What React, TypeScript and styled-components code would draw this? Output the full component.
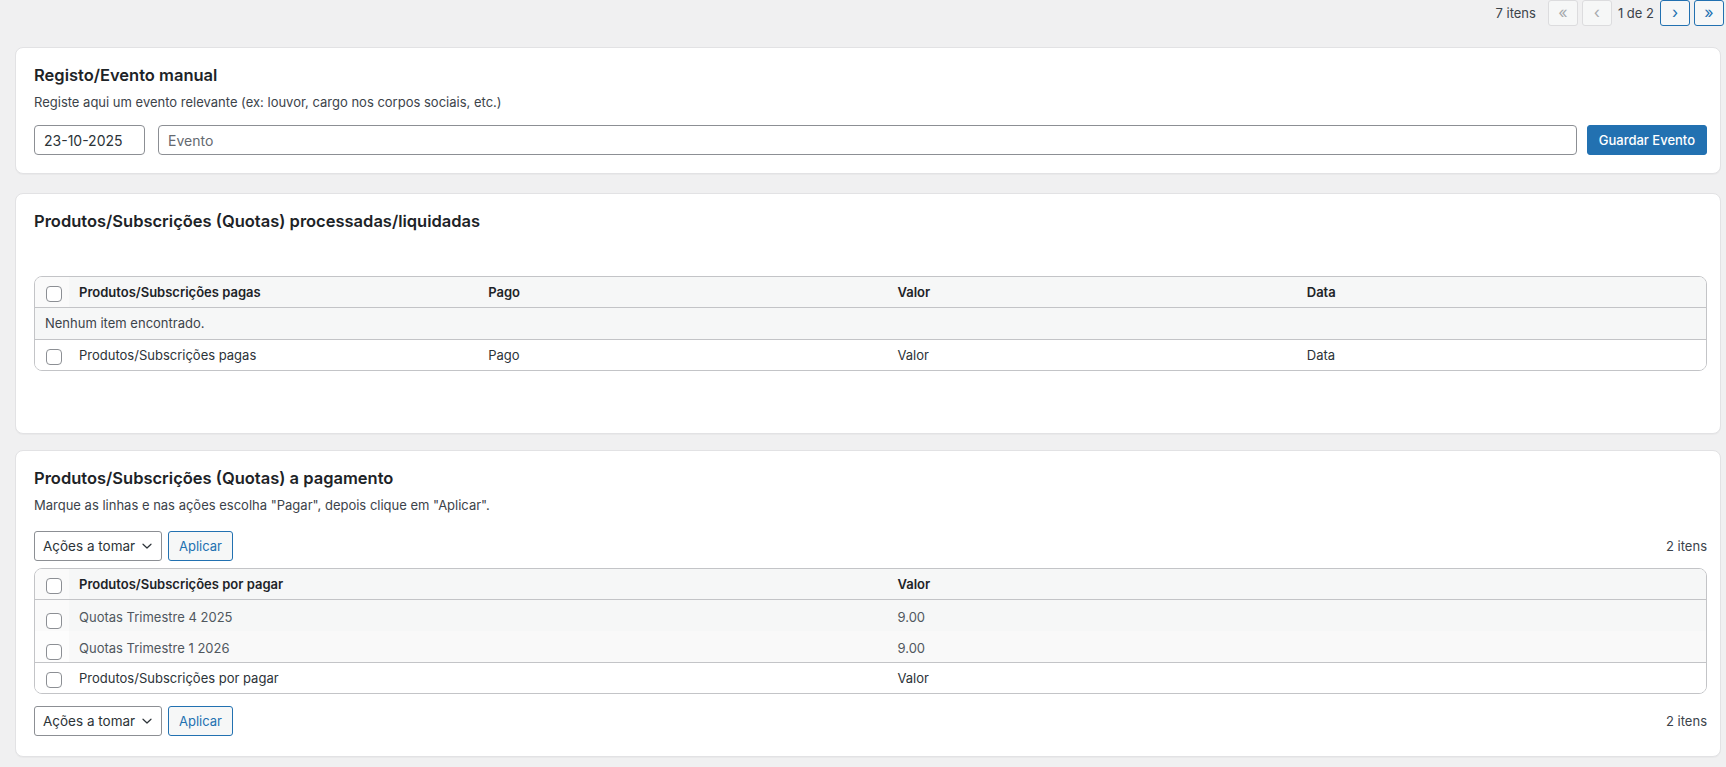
import React from "react";
import styled, { createGlobalStyle, css } from "styled-components";

const GlobalStyle = createGlobalStyle`
  html, body {
    margin: 0;
    padding: 0;
    background: #f0f0f1;
  }
  body {
    font-family: Inter, "Noto Sans", "Liberation Sans", sans-serif;
    font-size: 13px;
    line-height: 1.4;
    color: #3c434a;
    -webkit-font-smoothing: antialiased;
  }
  * { box-sizing: border-box; }
`;

const Page = styled.div`
  padding: 0 5px 11px 15px;
`;

/* ---------- pagination strip at the top ---------- */

const TopPager = styled.nav`
  display: flex;
  justify-content: flex-end;
  align-items: center;
  height: 26px;
  margin-right: -3px;
`;

const ItemCount = styled.span`
  font-size: 13px;
  color: #3c434a;
  white-space: nowrap;
`;

const PagerCount = styled(ItemCount)`
  margin-right: 12px;
`;

const PagerButtons = styled.div`
  display: flex;
  align-items: center;
  gap: 4px;
`;

const PageButton = styled.button<{ $disabled?: boolean }>`
  width: 30px;
  height: 26px;
  padding: 0 0 2px;
  border-radius: 3px;
  font-family: inherit;
  font-size: 16px;
  line-height: 1;
  display: flex;
  align-items: center;
  justify-content: center;
  cursor: pointer;
  ${({ $disabled }) =>
    $disabled
      ? css`
          background: #f6f7f7;
          border: 1px solid #dcdcde;
          color: #a7aaad;
          cursor: default;
        `
      : css`
          background: #f6f7f7;
          border: 1px solid #2271b1;
          color: #2271b1;
        `}
`;

const PageInfo = styled.span`
  margin: 0 2px;
  color: #3c434a;
`;

/* ---------- cards ---------- */

const Stack = styled.div`
  display: flex;
  flex-direction: column;
  margin-top: 21px;
`;

const Card = styled.section<{ $gap?: number; $bottom?: number }>`
  background: #fff;
  border: 1px solid #e2e2e4;
  border-radius: 8px;
  box-shadow: 0 1px 1px rgba(0, 0, 0, 0.03);
  padding: 16px 13px ${({ $bottom = 20 }) => $bottom}px 18px;
  margin-top: ${({ $gap = 0 }) => $gap}px;
`;

const CardTitle = styled.h2`
  margin: 0;
  font-size: 16.5px;
  line-height: 22px;
  font-weight: 600;
  color: #1d2327;
`;

const Description = styled.p`
  margin: 6px 0 0;
  line-height: 20px;
  color: #3c434a;
`;

/* ---------- manual event form ---------- */

const EventForm = styled.form`
  display: flex;
  align-items: center;
  margin-top: 13px;
`;

const TextField = styled.input<{ $width?: number }>`
  height: 30px;
  padding: 0 9px;
  border: 1px solid #8c8f94;
  border-radius: 4px;
  font-family: inherit;
  font-size: 14px;
  color: #2c3338;
  background: #fff;
  ${({ $width }) =>
    $width
      ? css`
          width: ${$width}px;
          flex: none;
        `
      : css`
          flex: 1;
          min-width: 0;
        `}
  &::placeholder {
    color: #646970;
  }
`;

const DateField = styled(TextField)`
  margin-right: 13px;
`;

const PrimaryButton = styled.button`
  margin-left: 10px;
  height: 30px;
  padding: 0 11px;
  border: 1px solid #2271b1;
  border-radius: 3px;
  background: #2271b1;
  color: #fff;
  font-family: inherit;
  font-size: 13px;
  font-weight: 500;
  white-space: nowrap;
  cursor: pointer;
`;

/* ---------- table navigation ---------- */

const Tablenav = styled.div<{ $top: number }>`
  display: flex;
  align-items: center;
  justify-content: space-between;
  height: 30px;
  margin-top: ${({ $top }) => $top}px;
`;

const BulkActions = styled.div`
  display: flex;
  align-items: center;
  gap: 6px;
`;

const SelectBox = styled.div`
  display: flex;
  align-items: center;
  width: 128px;
  height: 30px;
  padding: 0 8px;
  border: 1px solid #8c8f94;
  border-radius: 3px;
  background: #fff;
  color: #2c3338;
  font-size: 13.5px;
  white-space: nowrap;
  gap: 4px;
`;

const Chevron = styled.svg`
  width: 12px;
  height: 12px;
  margin-left: auto;
  flex: none;
`;

const SecondaryButton = styled.button`
  height: 30px;
  padding: 0 10px;
  border: 1px solid #2271b1;
  border-radius: 3px;
  background: #f6f7f7;
  color: #2271b1;
  font-family: inherit;
  font-size: 13px;
  cursor: pointer;
`;

/* ---------- list table ---------- */

const TableFrame = styled.div<{ $top: number }>`
  margin-top: ${({ $top }) => $top}px;
  border: 1px solid #c3c4c7;
  border-radius: 8px;
  overflow: hidden;
`;

const Table = styled.table`
  width: 100%;
  border-collapse: separate;
  border-spacing: 0;
  table-layout: fixed;
`;

const CheckCol = styled.col`
  width: 34px;
`;

type Tone = "head" | "odd" | "even" | "foot";

const rowBg: Record<Tone, string> = {
  head: "#f6f7f7",
  odd: "#f6f7f7",
  even: "#f9f9f9",
  foot: "#ffffff",
};

const cbBg: Record<Tone, string> = {
  head: "#fafafa",
  odd: "#fafafa",
  even: "#fdfdfd",
  foot: "#ffffff",
};

const Cell = styled.td<{ $tone: Tone }>`
  height: 31px;
  padding: 0 10px;
  text-align: left;
  vertical-align: middle;
  font-size: 13px;
  background: ${({ $tone }) => rowBg[$tone]};
  ${({ $tone }) =>
    $tone === "head" &&
    css`
      font-weight: 600;
      color: #1d2327;
      border-bottom: 1px solid #c3c4c7;
    `}
  ${({ $tone }) =>
    $tone === "foot" &&
    css`
      font-weight: 400;
      color: #2c3338;
      border-top: 1px solid #c3c4c7;
    `}
  ${({ $tone }) =>
    ($tone === "odd" || $tone === "even") &&
    css`
      color: #50575e;
      padding-top: 3px;
    `}
`;

const CheckCell = styled(Cell)`
  padding: 0 0 0 11px;
  background: ${({ $tone }) => cbBg[$tone]};
  ${({ $tone }) =>
    ($tone === "odd" || $tone === "even") &&
    css`
      vertical-align: top;
      padding-top: 13px;
    `}
  ${({ $tone }) =>
    ($tone === "head" || $tone === "foot") &&
    css`
      padding-top: 3px;
    `}
`;

const EmptyCell = styled(Cell)`
  color: #3c434a;
  padding-top: 0;
`;

const Checkbox = styled.span`
  display: block;
  width: 16px;
  height: 16px;
  border: 1px solid #8c8f94;
  border-radius: 4px;
  background: #fff;
`;

type Row = { name: string; value: string };

const unpaid: Row[] = [
  { name: "Quotas Trimestre 4 2025", value: "9.00" },
  { name: "Quotas Trimestre 1 2026", value: "9.00" },
];

function ChevronDown() {
  return (
    <Chevron viewBox="0 0 12 12" fill="none">
      <path
        d="M2 4.2 6 8l4-3.8"
        stroke="#2c3338"
        strokeWidth="1.2"
        strokeLinecap="round"
        strokeLinejoin="round"
      />
    </Chevron>
  );
}

function BulkBar({ top }: { top: number }) {
  return (
    <Tablenav $top={top}>
      <BulkActions>
        <SelectBox>
          Ações a tomar
          <ChevronDown />
        </SelectBox>
        <SecondaryButton type="button">Aplicar</SecondaryButton>
      </BulkActions>
      <ItemCount>2 itens</ItemCount>
    </Tablenav>
  );
}

export default function App() {
  const paidCols = ["Produtos/Subscrições pagas", "Pago", "Valor", "Data"];

  return (
    <>
      <GlobalStyle />
      <Page>
        <TopPager>
          <PagerCount>7 itens</PagerCount>
          <PagerButtons>
            <PageButton $disabled>«</PageButton>
            <PageButton $disabled>‹</PageButton>
            <PageInfo>1 de 2</PageInfo>
            <PageButton>›</PageButton>
            <PageButton>»</PageButton>
          </PagerButtons>
        </TopPager>

        <Stack>
          <Card $bottom={18}>
            <CardTitle>Registo/Evento manual</CardTitle>
            <Description>
              Registe aqui um evento relevante (ex: louvor, cargo nos corpos
              sociais, etc.)
            </Description>
            <EventForm onSubmit={(e) => e.preventDefault()}>
              <DateField $width={111} defaultValue="23-10-2025" />
              <TextField placeholder="Evento" />
              <PrimaryButton type="submit">Guardar Evento</PrimaryButton>
            </EventForm>
          </Card>

          <Card $gap={19}>
            <CardTitle>Produtos/Subscrições (Quotas) processadas/liquidadas</CardTitle>
            <Tablenav $top={7} />
            <TableFrame $top={7}>
              <Table>
                <colgroup>
                  <CheckCol />
                  <col />
                  <col />
                  <col />
                  <col />
                </colgroup>
                <thead>
                  <tr>
                    <CheckCell as="th" $tone="head">
                      <Checkbox />
                    </CheckCell>
                    {paidCols.map((c) => (
                      <Cell as="th" key={c} $tone="head">
                        {c}
                      </Cell>
                    ))}
                  </tr>
                </thead>
                <tbody>
                  <tr>
                    <EmptyCell $tone="odd" colSpan={5}>
                      Nenhum item encontrado.
                    </EmptyCell>
                  </tr>
                </tbody>
                <tfoot>
                  <tr>
                    <CheckCell as="th" $tone="foot">
                      <Checkbox />
                    </CheckCell>
                    {paidCols.map((c) => (
                      <Cell as="th" key={c} $tone="foot">
                        {c}
                      </Cell>
                    ))}
                  </tr>
                </tfoot>
              </Table>
            </TableFrame>
            <Tablenav $top={12} />
          </Card>

          <Card $gap={16}>
            <CardTitle>Produtos/Subscrições (Quotas) a pagamento</CardTitle>
            <Description>
              Marque as linhas e nas ações escolha "Pagar", depois clique em
              "Aplicar".
            </Description>
            <BulkBar top={16} />
            <TableFrame $top={7}>
              <Table>
                <colgroup>
                  <CheckCol />
                  <col />
                  <col />
                </colgroup>
                <thead>
                  <tr>
                    <CheckCell as="th" $tone="head">
                      <Checkbox />
                    </CheckCell>
                    <Cell as="th" $tone="head">
                      Produtos/Subscrições por pagar
                    </Cell>
                    <Cell as="th" $tone="head">
                      Valor
                    </Cell>
                  </tr>
                </thead>
                <tbody>
                  {unpaid.map((r, i) => {
                    const tone: Tone = i % 2 === 0 ? "odd" : "even";
                    return (
                      <tr key={r.name}>
                        <CheckCell as="th" $tone={tone}>
                          <Checkbox />
                        </CheckCell>
                        <Cell $tone={tone}>{r.name}</Cell>
                        <Cell $tone={tone}>{r.value}</Cell>
                      </tr>
                    );
                  })}
                </tbody>
                <tfoot>
                  <tr>
                    <CheckCell as="th" $tone="foot">
                      <Checkbox />
                    </CheckCell>
                    <Cell as="th" $tone="foot">
                      Produtos/Subscrições por pagar
                    </Cell>
                    <Cell as="th" $tone="foot">
                      Valor
                    </Cell>
                  </tr>
                </tfoot>
              </Table>
            </TableFrame>
            <BulkBar top={12} />
          </Card>
        </Stack>
      </Page>
    </>
  );
}
